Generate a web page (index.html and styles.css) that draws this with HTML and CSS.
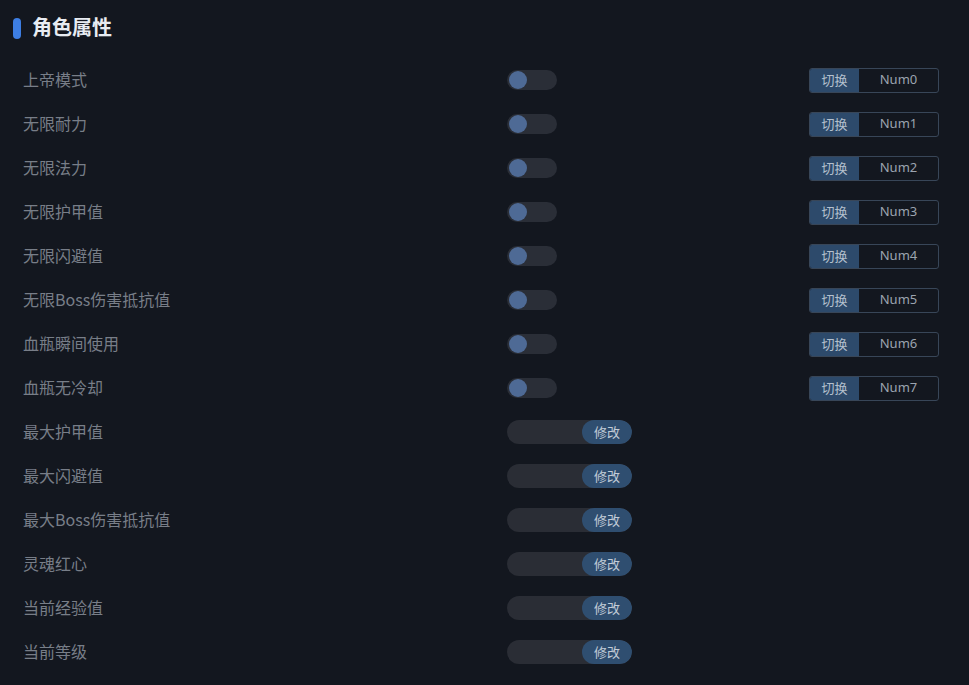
FILE: index.html
```html
<!DOCTYPE html>
<html>
<head>
<meta charset="utf-8">
<link rel="stylesheet" href="styles.css">
</head>
<body>
<div class="panel">
  <div class="header"><span class="bar"></span><h1>角色属性</h1></div>
  <div class="rows">
    <div class="row"><span class="label">上帝模式</span><span class="toggle"><span class="knob"></span></span><span class="hotkey"><span class="hk-btn">切换</span><span class="hk-key">Num0</span></span></div>
    <div class="row"><span class="label">无限耐力</span><span class="toggle"><span class="knob"></span></span><span class="hotkey"><span class="hk-btn">切换</span><span class="hk-key">Num1</span></span></div>
    <div class="row"><span class="label">无限法力</span><span class="toggle"><span class="knob"></span></span><span class="hotkey"><span class="hk-btn">切换</span><span class="hk-key">Num2</span></span></div>
    <div class="row"><span class="label">无限护甲值</span><span class="toggle"><span class="knob"></span></span><span class="hotkey"><span class="hk-btn">切换</span><span class="hk-key">Num3</span></span></div>
    <div class="row"><span class="label">无限闪避值</span><span class="toggle"><span class="knob"></span></span><span class="hotkey"><span class="hk-btn">切换</span><span class="hk-key">Num4</span></span></div>
    <div class="row"><span class="label">无限Boss伤害抵抗值</span><span class="toggle"><span class="knob"></span></span><span class="hotkey"><span class="hk-btn">切换</span><span class="hk-key">Num5</span></span></div>
    <div class="row"><span class="label">血瓶瞬间使用</span><span class="toggle"><span class="knob"></span></span><span class="hotkey"><span class="hk-btn">切换</span><span class="hk-key">Num6</span></span></div>
    <div class="row"><span class="label">血瓶无冷却</span><span class="toggle"><span class="knob"></span></span><span class="hotkey"><span class="hk-btn">切换</span><span class="hk-key">Num7</span></span></div>
    <div class="row"><span class="label">最大护甲值</span><span class="input"><span class="field"></span><span class="edit">修改</span></span></div>
    <div class="row"><span class="label">最大闪避值</span><span class="input"><span class="field"></span><span class="edit">修改</span></span></div>
    <div class="row"><span class="label">最大Boss伤害抵抗值</span><span class="input"><span class="field"></span><span class="edit">修改</span></span></div>
    <div class="row"><span class="label">灵魂红心</span><span class="input"><span class="field"></span><span class="edit">修改</span></span></div>
    <div class="row"><span class="label">当前经验值</span><span class="input"><span class="field"></span><span class="edit">修改</span></span></div>
    <div class="row"><span class="label">当前等级</span><span class="input"><span class="field"></span><span class="edit">修改</span></span></div>
  </div>
</div>
</body>
</html>
```

FILE: styles.css
```css
html, body {
  margin: 0;
  padding: 0;
  background: #13171f;
  font-family: "Noto Sans CJK SC", "Noto Sans", sans-serif;
}
.panel {
  width: 969px;
  height: 685px;
  overflow: hidden;
}
.header {
  display: flex;
  align-items: center;
  height: 56px;
  padding-left: 13px;
  box-sizing: border-box;
}
.bar {
  width: 8px;
  height: 21px;
  border-radius: 4px;
  background: #3d7ee3;
  margin-right: 11px;
}
.header h1 {
  margin: 0 0 2px 0;
  font-size: 20px;
  font-weight: 700;
  color: #e8ecf2;
  line-height: 1;
}
.rows {
  display: flex;
  flex-direction: column;
  padding-top: 2px;
}
.row {
  height: 44px;
  display: flex;
  align-items: center;
  padding-left: 23px;
}
.label {
  width: 484px;
  font-size: 16px;
  line-height: 20px;
  padding-bottom: 2px;
  color: #787e88;
}
.toggle {
  width: 50px;
  height: 20px;
  border-radius: 10px;
  background: #2a2e37;
  display: flex;
  align-items: center;
  padding-left: 2px;
  box-sizing: border-box;
}
.knob {
  width: 18px;
  height: 18px;
  border-radius: 50%;
  background: #4e6a95;
}
.hotkey {
  margin-left: 252px;
  width: 130px;
  height: 25px;
  border: 1px solid #384658;
  border-radius: 3px;
  box-sizing: border-box;
  display: flex;
  overflow: hidden;
  font-size: 13px;
  line-height: 1;
}
.hk-btn {
  width: 49px;
  background: #2d4a6b;
  color: #b4c0ce;
  display: flex;
  align-items: center;
  justify-content: center;
  padding-bottom: 2px;
}
.hk-key {
  flex: 1;
  color: #9ca4af;
  display: flex;
  align-items: center;
  justify-content: center;
  padding-bottom: 1px;
  font-family: "Noto Sans", sans-serif;
}
.input {
  width: 125px;
  height: 24px;
  border-radius: 12px;
  background: #2a2d35;
  display: flex;
  overflow: hidden;
}
.field {
  flex: 1;
}
.edit {
  width: 50px;
  background: #2f4e70;
  border-radius: 12px;
  color: #c2ccd8;
  font-size: 13px;
  line-height: 1;
  display: flex;
  align-items: center;
  justify-content: center;
  padding-bottom: 2px;
}
```
